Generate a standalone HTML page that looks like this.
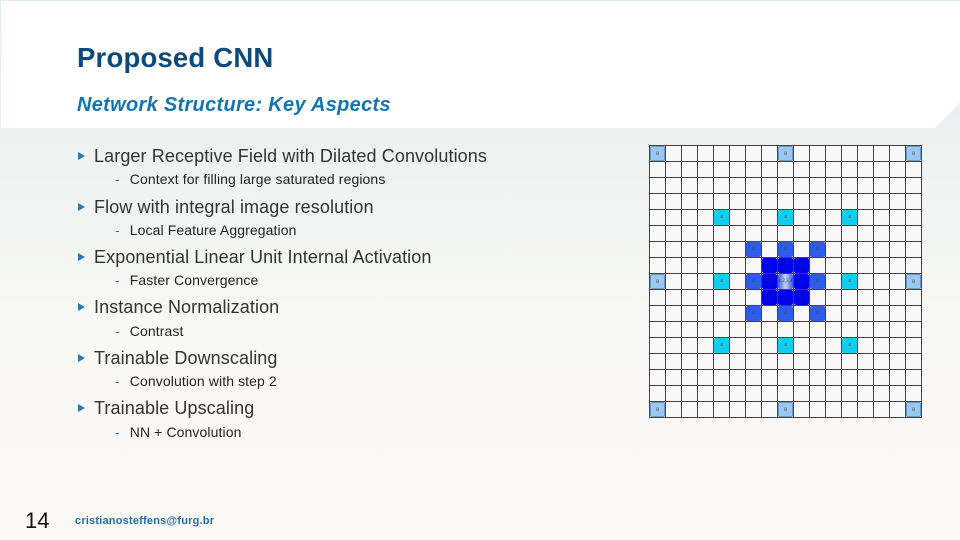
<!DOCTYPE html>
<html><head><meta charset="utf-8"><style>
*{margin:0;padding:0;box-sizing:border-box}
body{width:960px;height:540px;overflow:hidden;position:relative;font-family:"Liberation Sans",sans-serif;background:linear-gradient(#e2ebec 0%,#eef2f1 30%,#f8f8f5 60%,#fbf9f6 100%)}
.hdr{position:absolute;left:1px;top:1px;width:959px;height:127px;background:#fff;clip-path:polygon(0 0,100% 0,100% 80%,97.4% 100%,0 100%)}
.t1{position:absolute;left:77px;top:42px;font-size:27.5px;font-weight:bold;color:#0d4a7a;letter-spacing:0.2px}
.t2{position:absolute;left:77px;top:94px;font-size:20px;font-weight:bold;font-style:italic;color:#1474b0;letter-spacing:0.3px}
.m{position:absolute;left:78px;font-size:18px;color:#333;white-space:nowrap;letter-spacing:0.1px}
.m:before{content:"";position:absolute;left:0;top:6px;border-left:7px solid #2b79b5;border-top:4px solid transparent;border-bottom:4px solid transparent}
.m span{margin-left:16px}
.s{position:absolute;left:115px;font-size:14px;color:#222;white-space:nowrap;letter-spacing:0.1px}
.s b{font-weight:normal;color:#2b79b5;margin-right:10px}
.grid{position:absolute;left:649px;top:145px;width:273px;height:273px;background-color:#f7f8f7;background-image:linear-gradient(90deg,#444 1px,transparent 1px),linear-gradient(#444 1px,transparent 1px);background-size:16px 16px}
.c{position:absolute;width:15px;height:15px;border-radius:2px;font-size:5px;color:#333;text-align:center;line-height:15px;font-family:"Liberation Serif",serif}
.e{background:#99c8f2;border:1px solid #6a9ac8}
.f{background:#12cdf0}
.t{background:#2e5ce8}
.o{background:#0005e8}
.x{background:linear-gradient(90deg,#3c5ae6,#c8d2f5,#3c5ae6)}
.pg{position:absolute;left:25px;top:508px;font-size:22px;color:#111}
.em{position:absolute;left:75px;top:515px;font-size:11px;font-weight:bold;color:#1f6fa8;letter-spacing:0.2px}
</style></head><body>
<div class="hdr"></div>
<div class="t1">Proposed CNN</div>
<div class="t2">Network Structure: Key Aspects</div>

<div class="m" style="top:146px"><span>Larger Receptive Field with Dilated Convolutions</span></div>
<div class="s" style="top:171px"><b>-</b>Context for filling large saturated regions</div>
<div class="m" style="top:197px"><span>Flow with integral image resolution</span></div>
<div class="s" style="top:222px"><b>-</b>Local Feature Aggregation</div>
<div class="m" style="top:247px"><span>Exponential Linear Unit Internal Activation</span></div>
<div class="s" style="top:272px"><b>-</b>Faster Convergence</div>
<div class="m" style="top:297px"><span>Instance Normalization</span></div>
<div class="s" style="top:323px"><b>-</b>Contrast</div>
<div class="m" style="top:348px"><span>Trainable Downscaling</span></div>
<div class="s" style="top:373px"><b>-</b>Convolution with step 2</div>
<div class="m" style="top:398px"><span>Trainable Upscaling</span></div>
<div class="s" style="top:424px"><b>-</b>NN + Convolution</div>

<div class="grid">
<div class="c e" style="left:1px;top:1px">8</div>
<div class="c e" style="left:129px;top:1px">8</div>
<div class="c e" style="left:257px;top:1px">8</div>
<div class="c e" style="left:1px;top:129px">8</div>
<div class="c e" style="left:257px;top:129px">8</div>
<div class="c e" style="left:1px;top:257px">8</div>
<div class="c e" style="left:129px;top:257px">8</div>
<div class="c e" style="left:257px;top:257px">8</div>
<div class="c f" style="left:65px;top:65px">4</div>
<div class="c f" style="left:129px;top:65px">4</div>
<div class="c f" style="left:193px;top:65px">4</div>
<div class="c f" style="left:65px;top:129px">4</div>
<div class="c f" style="left:193px;top:129px">4</div>
<div class="c f" style="left:65px;top:193px">4</div>
<div class="c f" style="left:129px;top:193px">4</div>
<div class="c f" style="left:193px;top:193px">4</div>
<div class="c t" style="left:97px;top:97px">2</div>
<div class="c t" style="left:129px;top:97px">2</div>
<div class="c t" style="left:161px;top:97px">2</div>
<div class="c t" style="left:97px;top:129px">2</div>
<div class="c t" style="left:161px;top:129px">2</div>
<div class="c t" style="left:97px;top:161px">2</div>
<div class="c t" style="left:129px;top:161px">2</div>
<div class="c t" style="left:161px;top:161px">2</div>
<div class="c o" style="left:113px;top:113px">1</div>
<div class="c o" style="left:129px;top:113px">1</div>
<div class="c o" style="left:145px;top:113px">1</div>
<div class="c o" style="left:113px;top:129px">1</div>
<div class="c x" style="left:129px;top:129px">1,2,3,4</div>
<div class="c o" style="left:145px;top:129px">1</div>
<div class="c o" style="left:113px;top:145px">1</div>
<div class="c o" style="left:129px;top:145px">1</div>
<div class="c o" style="left:145px;top:145px">1</div>
</div>

<div class="pg">14</div>
<div class="em">cristianosteffens@furg.br</div>
</body></html>
